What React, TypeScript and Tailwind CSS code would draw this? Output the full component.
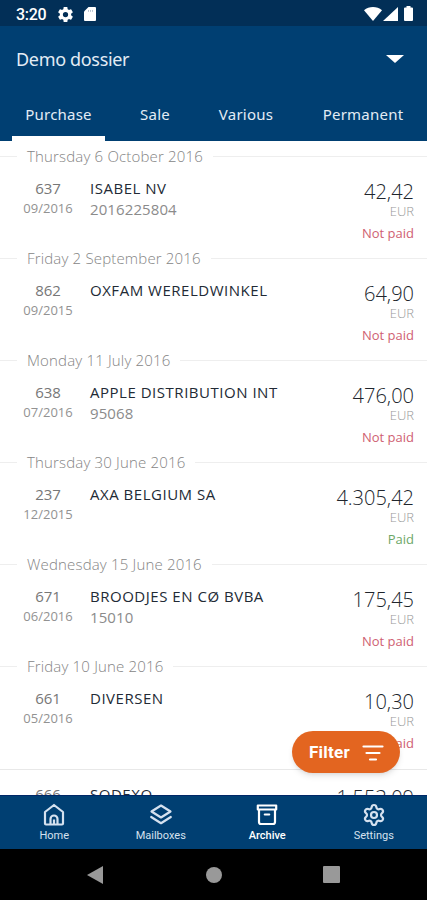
import { Settings } from 'lucide-react'

type Entry = {
    date?: string
    number: string
    period: string
    name: string
    reference?: string
    amount: string
    paid?: boolean
}

const entries: Entry[] = [
    { date: 'Thursday 6 October 2016', number: '637', period: '09/2016', name: 'ISABEL NV', reference: '2016225804', amount: '42,42' },
    { date: 'Friday 2 September 2016', number: '862', period: '09/2015', name: 'OXFAM WERELDWINKEL', amount: '64,90' },
    { date: 'Monday 11 July 2016', number: '638', period: '07/2016', name: 'APPLE DISTRIBUTION INT', reference: '95068', amount: '476,00' },
    { date: 'Thursday 30 June 2016', number: '237', period: '12/2015', name: 'AXA BELGIUM SA', amount: '4.305,42', paid: true },
    { date: 'Wednesday 15 June 2016', number: '671', period: '06/2016', name: 'BROODJES EN CØ BVBA', reference: '15010', amount: '175,45' },
    { date: 'Friday 10 June 2016', number: '661', period: '05/2016', name: 'DIVERSEN', amount: '10,30' },
    { number: '666', period: '', name: 'SODEXO', amount: '1.553,09' }
]

function StatusBar() {
    return (
        <div className="flex h-[26px] shrink-0 items-center bg-[#022f57] pr-[14px] pl-4 text-white">
            <span className="w-[42px] pt-[3px] font-['Roboto'] text-[16px] font-medium tracking-[-0.3px]">3:20</span>
            <svg className="mt-[2px] h-[15px] w-[15px]" viewBox="2.200 2 19.600 20" fill="currentColor">
                <path
                    fillRule="evenodd"
                    d="M19.430 12.980c.04-.320.070-.640.070-.980s-.030-.660-.070-.980l2.110-1.650c.190-.150.240-.420.120-.640l-2-3.460c-.120-.220-.390-.300-.610-.220l-2.490 1c-.520-.400-1.080-.730-1.690-.980l-.380-2.650C14.460 2.180 14.250 2 14 2h-4c-.250 0-.460.180-.490.420l-.380 2.650c-.610.250-1.170.590-1.690.980l-2.490-1c-.230-.090-.490 0-.610.220l-2 3.460c-.130.220-.070.490.120.640l2.110 1.650c-.040.320-.070.650-.070.980s.030.660.070.980l-2.110 1.650c-.190.150-.240.420-.120.640l2 3.460c.120.220.390.300.610.220l2.490-1c.520.400 1.080.730 1.690.980l.380 2.650c.030.240.240.420.490.420h4c.250 0 .460-.180.490-.420l.380-2.650c.610-.250 1.170-.590 1.690-.980l2.490 1c.230.090.490 0 .610-.220l2-3.460c.120-.220.070-.490-.120-.640zM12 15.500a3.500 3.500 0 1 1 0-7 3.500 3.500 0 0 1 0 7z"
                />
            </svg>
            <svg className="mt-0.5 ml-[11px] h-[14px] w-3" viewBox="0 0 12 14" fill="currentColor">
                <path d="M4.500 0H11a1 1 0 0 1 1 1v12a1 1 0 0 1-1 1H1a1 1 0 0 1-1-1V4.500z" />
                <path d="M4.500 3.200v1.500M6.500 3.200v1.500M8.500 3.200v1.500" stroke="#8d9fb5" strokeWidth="0.8" />
            </svg>
            <svg className="mt-0.5 ml-auto h-[14px] w-[18px]" viewBox="0 0 18 14" fill="currentColor">
                <path d="M0 3.200C5-1 13-1 18 3.200L9 14z" />
            </svg>
            <svg className="mt-0.5 ml-[1px] h-[14px] w-[15px]" viewBox="0 0 15 14" fill="currentColor">
                <path d="M15 0v14H0z" />
            </svg>
            <svg className="mt-px ml-[6px] h-[15px] w-[9px]" viewBox="0 0 9 15" fill="currentColor">
                <path d="M2.500 0h4v1.500H8a1 1 0 0 1 1 1V14a1 1 0 0 1-1 1H1a1 1 0 0 1-1-1V2.500a1 1 0 0 1 1-1h1.500z" />
            </svg>
        </div>
    )
}

function Header() {
    return (
        <header className="flex h-[115px] shrink-0 flex-col bg-[#003f72] text-[#e3ecf5]">
            <div className="flex h-[66px] items-center justify-between pr-[23px] pl-4">
                <h1 className="font-['Noto_Sans'] text-[18px] tracking-[-0.33px]">Demo dossier</h1>
                <svg className="h-2 w-[18px]" viewBox="0 0 18 8" fill="#fff">
                    <path d="M0 0h18L9 8z" />
                </svg>
            </div>
            <nav className="flex h-[49px] pl-3 font-['Noto_Sans'] text-[15px] tracking-[0.22px] whitespace-nowrap">
                <div className="flex w-[93px] shrink-0 flex-col items-center justify-between">
                    <span className="pt-[11px]">Purchase</span>
                    <span className="h-[5px] w-full bg-white" />
                </div>
                <span className="w-[100px] shrink-0 pt-[11px] text-center">Sale</span>
                <span className="w-[82px] shrink-0 pt-[11px] text-center">Various</span>
                <span className="w-[152px] shrink-0 pt-[11px] text-center">Permanent</span>
            </nav>
        </header>
    )
}

function EntryRow({ entry }: { entry: Entry }) {
    return (
        <section className="h-[102.1px] shrink-0">
            {entry.date ? (
                <div className="flex h-[30px] items-center">
                    <span className="h-px w-[17px] bg-[#eeeeee]" />
                    <span className="px-[10px] text-[15px] font-light tracking-[0.17px] whitespace-nowrap text-[#858585]">
                        {entry.date}
                    </span>
                    <span className="h-px flex-1 bg-[#eeeeee]" />
                </div>
            ) : (
                <div className="h-[23px] pt-[15px]">
                    <div className="h-px bg-[#e8e8e8]" />
                </div>
            )}

            <div className="flex pr-[13px]">
                <div className="w-[96px] pt-[7px] text-center text-[#777]">
                    <div className="text-[15px] leading-5">{entry.number}</div>
                    <div className="text-[13px] leading-5 text-[#929292]">{entry.period}</div>
                </div>
                <div className="-ml-[6px] flex-1 pt-[7px] text-[15px] whitespace-nowrap">
                    <div className="leading-5 tracking-[0.52px] text-[#222a35]">{entry.name}</div>
                    <div className="leading-[22px] tracking-[0.1px] text-[#8b8b8b]">{entry.reference}</div>
                </div>
                <div className="pt-[9px] text-right">
                    <div className="text-[20px] leading-[23px] font-light text-[#20252c]">{entry.amount}</div>
                    {entry.period && (
                        <>
                            <div className="text-[13px] leading-4 font-light text-[#999]">EUR</div>
                            <div className={entry.paid ? 'text-[13px] leading-7 text-[#6da767]' : 'text-[13px] leading-7 text-[#cf5f72]'}>
                                {entry.paid ? 'Paid' : 'Not paid'}
                            </div>
                        </>
                    )}
                </div>
            </div>
        </section>
    )
}

function BottomNav() {
    return (
        <nav className="grid h-[54px] shrink-0 grid-cols-4 border-t border-[#002767] bg-[#003f72] pl-px font-['Roboto'] text-[11px] leading-3 text-[#d5e1ef]">
            <div className="flex flex-col items-center gap-[3px] pt-[7px]">
                <svg className="h-6 w-6" viewBox="0 0 24 24" fill="none" stroke="currentColor" strokeWidth="2.200" strokeLinejoin="round">
                    <path d="M3 9 12 2l9 7v11.500a1 1 0 0 1-1 1H4a1 1 0 0 1-1-1zM8.500 21.500V16a3.500 3.500 0 0 1 7 0v5.500M12 16.500v5" />
                </svg>
                Home
            </div>
            <div className="flex flex-col items-center gap-[3px] pt-[7px]">
                <svg className="h-6 w-6" viewBox="0 0 24 24" fill="none" stroke="currentColor" strokeWidth="2.200" strokeLinejoin="round" strokeLinecap="round">
                    <path d="M12 2.500 21.500 8.500 12 14.500 2.500 8.500zM2.200 14 12 20.200 21.800 14" />
                </svg>
                Mailboxes
            </div>
            <div className="flex flex-col items-center gap-[3px] pt-[7px] font-medium text-white">
                <svg className="h-6 w-6" viewBox="0 0 24 24" fill="none" stroke="currentColor" strokeWidth="2.200" strokeLinejoin="round" strokeLinecap="round">
                    <path d="M2.800 2.500h18.400v4H2.800zM4 6.500V19a2 2 0 0 0 2 2h12a2 2 0 0 0 2-2V6.500M9.800 11.500h4.400" />
                </svg>
                Archive
            </div>
            <div className="flex flex-col items-center gap-[3px] pt-[7px]">
                <Settings className="h-6 w-6" strokeWidth={2.2} />
                Settings
            </div>
        </nav>
    )
}

function SystemNav() {
    return (
        <div className="flex h-[51px] shrink-0 items-center bg-black pl-[86px] text-[#999]">
            <svg className="h-[18px] w-[18px]" viewBox="0 0 18 18" fill="currentColor">
                <path d="M17 0v18L1 9z" />
            </svg>
            <span className="ml-[102px] h-4 w-4 rounded-full bg-[#999]" />
            <span className="ml-[101px] h-[17px] w-[17px] rounded-[1px] bg-[#999]" />
        </div>
    )
}

export default function App() {
    return (
        <div className="flex h-[900px] w-[427px] flex-col overflow-hidden bg-white font-['Open_Sans',sans-serif]">
            <StatusBar />
            <Header />

            <main className="relative flex min-h-0 flex-1 flex-col overflow-hidden">
                {entries.map((entry) => (
                    <EntryRow key={entry.number} entry={entry} />
                ))}

                <button className="absolute right-[27px] bottom-[22px] flex h-[42px] w-[108px] items-center rounded-full bg-[#e36520] pt-px pl-[17px] font-['Roboto'] text-[17px] font-bold tracking-[0.25px] text-white shadow-md">
                    Filter
                    <svg className="mr-4 ml-auto h-4 w-[22px]" viewBox="0 0 22 16" stroke="currentColor" strokeWidth="2.200" strokeLinecap="round">
                        <path d="M1.500 1.500h19M4.500 8h13M8 14.500h6" />
                    </svg>
                </button>
            </main>

            <BottomNav />
            <SystemNav />
        </div>
    )
}
